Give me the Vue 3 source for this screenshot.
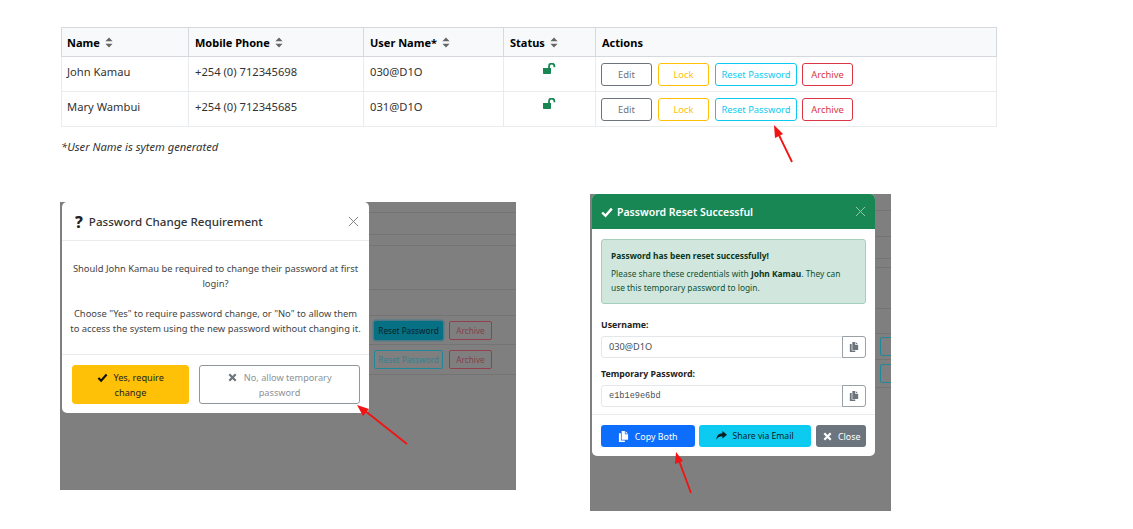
<script setup>
const users = [
  { name: 'John Kamau', phone: '+254 (0) 712345698', username: '030@D1O' },
  { name: 'Mary Wambui', phone: '+254 (0) 712345685', username: '031@D1O' }
]
const columns = [
  { label: 'Name', sort: true },
  { label: 'Mobile Phone', sort: true },
  { label: 'User Name*', sort: true },
  { label: 'Status', sort: true },
  { label: 'Actions', sort: false }
]
// dimmed table rows showing behind each modal
const leftRows = [
  { h: 11 }, { h: 22 }, { h: 11 }, { h: 44 }, { h: 26 },
  { h: 29, active: true }, { h: 30, plain: true }
]
const rightRows = [
  { h: 17 }, { h: 26 }, { h: 22 }, { h: 9 }, { h: 41 }, { h: 25 },
  { h: 26, stub: true }, { h: 28, stub: true }
]
</script>

<template>
  <div class="page">
    <table class="users">
      <colgroup>
        <col style="width: 127px" />
        <col style="width: 175px" />
        <col style="width: 140px" />
        <col style="width: 92px" />
        <col />
      </colgroup>
      <thead>
        <tr>
          <th v-for="col in columns" :key="col.label">
            {{ col.label }}
            <svg v-if="col.sort" class="sort" viewBox="0 0 8 11">
              <path d="M4 0.5 L7.6 4.3 H0.4 Z M4 10.5 L0.4 6.7 H7.6 Z" />
            </svg>
          </th>
        </tr>
      </thead>
      <tbody>
        <tr v-for="user in users" :key="user.username">
          <td>{{ user.name }}</td>
          <td>{{ user.phone }}</td>
          <td>{{ user.username }}</td>
          <td class="status">
            <svg class="unlock" viewBox="0 0 13 11">
              <path d="M0 5 H8 V10.2 Q8 11 7.2 11 H0.8 Q0 11 0 10.2 Z" />
              <path class="shackle" d="M6 5 V3.2 A2.6 2.6 0 0 1 11.4 3.2 V4.2" />
            </svg>
          </td>
          <td class="actions">
            <button class="btn edit">Edit</button>
            <button class="btn lock">Lock</button>
            <button class="btn reset">Reset Password</button>
            <button class="btn archive">Archive</button>
          </td>
        </tr>
      </tbody>
    </table>

    <p class="note">*User Name is sytem generated</p>

    <div class="shots">
      <div class="shot shot-left">
        <div class="modal change-modal">
          <div class="change-head">
            <span class="qmark">?</span>
            <h3>Password Change Requirement</h3>
            <svg class="close-x" viewBox="0 0 12 12"><path d="M1 1 L11 11 M11 1 L1 11" /></svg>
          </div>
          <div class="change-body">
            <p>Should John Kamau be required to change their password at first login?</p>
            <p>Choose "Yes" to require password change, or "No" to allow them<br />to access the system using the new password without changing it.</p>
          </div>
          <div class="change-foot">
            <button class="big-btn yes">
              <svg class="ico" viewBox="0 0 12 12"><path class="thick" d="M1.5 6.5 L4.5 9.5 L10.5 2.8" /></svg>
              Yes, require change
            </button>
            <button class="big-btn no">
              <svg class="ico" viewBox="0 0 12 12"><path class="thick" d="M2.5 2.5 L9.5 9.5 M9.5 2.5 L2.5 9.5" /></svg>
              No, allow temporary password
            </button>
          </div>
        </div>
        <div class="behind">
          <div
            v-for="(row, i) in leftRows"
            :key="i"
            class="dim-row"
            :style="{ height: row.h + 'px' }"
          >
            <template v-if="row.active || row.plain">
              <span class="dim-btn reset-dim" :class="row.active ? 'active' : 'teal'">Reset Password</span>
              <span class="dim-btn red">Archive</span>
            </template>
          </div>
        </div>
      </div>

      <div class="shot shot-right">
        <div class="modal success-modal">
          <div class="success-head">
            <svg class="ico head-ico" viewBox="0 0 12 12"><path class="thick" d="M1.2 6.5 L4.5 9.8 L10.8 2.6" /></svg>
            <h3>Password Reset Successful</h3>
            <svg class="close-x light" viewBox="0 0 12 12"><path d="M1 1 L11 11 M11 1 L1 11" /></svg>
          </div>
          <div class="success-body">
            <div class="alert">
              <strong class="alert-title">Password has been reset successfully!</strong>
              <p>Please share these credentials with <strong>John Kamau</strong>. They can use this temporary password to login.</p>
            </div>
            <label>Username:</label>
            <div class="field">
              <span class="value">030@D1O</span>
              <button class="copy-btn">
                <svg class="copy-ico" viewBox="0 0 12 12"><path d="M4 0 H7.5 V3.5 H11 V9.5 H4 Z M8.3 0.3 L10.8 2.8 H8.3 Z M1 2.5 H3.2 V10.3 H7.5 V12 H1 Z" /></svg>
              </button>
            </div>
            <label>Temporary Password:</label>
            <div class="field">
              <span class="value mono">e1b1e9e6bd</span>
              <button class="copy-btn">
                <svg class="copy-ico" viewBox="0 0 12 12"><path d="M4 0 H7.5 V3.5 H11 V9.5 H4 Z M8.3 0.3 L10.8 2.8 H8.3 Z M1 2.5 H3.2 V10.3 H7.5 V12 H1 Z" /></svg>
              </button>
            </div>
          </div>
          <div class="success-foot">
            <button class="foot-btn copy-both">
              <svg class="ico fill" viewBox="0 0 12 12"><path d="M4 0 H7.5 V3.5 H11 V9.5 H4 Z M8.3 0.3 L10.8 2.8 H8.3 Z M1 2.5 H3.2 V10.3 H7.5 V12 H1 Z" /></svg>
              Copy Both
            </button>
            <button class="foot-btn share">
              <svg class="ico fill" viewBox="0 0 12 12"><path d="M7 1 L12 5.2 L7 9.4 V6.7 C4 6.7 2 7.4 0.5 10.5 C0.6 6 3 3.6 7 3.5 Z" /></svg>
              Share via Email
            </button>
            <button class="foot-btn close">
              <svg class="ico" viewBox="0 0 12 12"><path class="thick" d="M2.5 2.5 L9.5 9.5 M9.5 2.5 L2.5 9.5" /></svg>
              Close
            </button>
          </div>
        </div>
        <div class="behind">
          <div
            v-for="(row, i) in rightRows"
            :key="i"
            class="dim-row"
            :style="{ height: row.h + 'px' }"
          >
            <span v-if="row.stub" class="dim-btn teal stub"></span>
          </div>
        </div>
      </div>
    </div>

    <svg class="arrows" viewBox="0 0 1133 529">
      <g class="arrow">
        <path d="M792 162 L777 131" />
        <path class="head" d="M774 125 L783 134 L775 138 Z" />
      </g>
      <g class="arrow">
        <path d="M407 444 L364 410" />
        <path class="head" d="M357 405 L369 409 L363 416 Z" />
      </g>
      <g class="arrow">
        <path d="M691 493 L678 458" />
        <path class="head" d="M676 452 L683 461 L675 464 Z" />
      </g>
    </svg>
  </div>
</template>

<style>
html, body {
  background: #fff;
}
</style>

<style scoped>
.page {
  position: relative;
  width: 1133px;
  height: 529px;
  overflow: hidden;
  padding: 27px 0 0 61px;
  box-sizing: border-box;
  font-family: "Noto Sans", "Open Sans", sans-serif;
  font-size: 11.2px;
  color: #212529;
}

.users {
  width: 936px;
  border-collapse: collapse;
  table-layout: fixed;
}

.users th,
.users td {
  box-sizing: border-box;
  border: 1px solid #e9ecef;
  padding: 0 6px;
  text-align: left;
}

.users th:first-child,
.users td:first-child {
  padding-left: 5px;
}

.users th {
  height: 29px;
  background: #f8f9fa;
  border-color: #d5d8dc;
  color: #000;
  font-weight: 700;
  font-size: 11px;
}

.users td {
  height: 35px;
  padding-bottom: 5px;
  font-size: 11.2px;
  color: #333;
}

.sort {
  width: 8px;
  height: 11px;
  margin-left: 2px;
  vertical-align: -1px;
  fill: #666;
}

.users td.status {
  vertical-align: top;
  text-align: center;
  padding-top: 6px;
}

.unlock {
  display: block;
  width: 13px;
  height: 11px;
  margin: 0 auto;
  fill: #198754;
}

.unlock .shackle {
  fill: none;
  stroke: #198754;
  stroke-width: 1.8;
}

.users td.actions {
  padding: 0 5px;
  font-size: 0;
}

.btn {
  height: 23px;
  margin-right: 6px;
  padding: 0;
  background: #fff;
  border: 1px solid;
  border-radius: 3px;
  font-family: inherit;
  font-size: 9.4px;
}

.btn.edit { width: 51px; color: #6c757d; border-color: #6c757d; }
.btn.lock { width: 51px; color: #ffc107; border-color: #ffc107; }
.btn.reset { width: 82px; margin-right: 5px; color: #0dcaf0; border-color: #0dcaf0; }
.btn.archive { width: 51px; color: #dc3545; border-color: #dc3545; }

.note {
  margin: 12px 0 0;
  font-size: 11.2px;
  font-style: italic;
  color: #333;
}

.shots {
  display: flex;
  align-items: flex-start;
  margin: 40px 0 0 -1px;
}

.shot {
  display: flex;
  background: #7f7f7f;
  overflow: hidden;
  padding-left: 2px;
  box-sizing: border-box;
}

.shot-left {
  width: 456px;
  height: 288px;
  margin-top: 8px;
}

.shot-right {
  width: 301px;
  height: 317px;
  margin-left: 74px;
}

.modal {
  flex: none;
  background: #fff;
  border-radius: 5px;
  display: flex;
  flex-direction: column;
  align-self: flex-start;
}

.change-modal {
  width: 307px;
  height: 211px;
}

.change-head {
  display: flex;
  align-items: center;
  height: 39px;
  padding: 0 10px 0 13px;
  border-bottom: 1px solid #e9ecef;
  box-sizing: border-box;
}

.qmark {
  font-size: 16px;
  font-weight: 800;
  color: #222;
  margin-right: 6px;
  margin-top: 2px;
}

.change-head h3 {
  flex: 1;
  margin: 0;
  font-size: 11.6px;
  font-weight: 500;
  color: #333;
}

.close-x {
  width: 11px;
  height: 11px;
  fill: none;
  stroke: #777;
  stroke-width: 1;
}

.close-x.light {
  stroke: #9ccdb3;
}

.change-body {
  height: 114px;
  padding: 20px 6px 0;
  box-sizing: border-box;
  border-bottom: 1px solid #e9ecef;
  text-align: center;
  font-size: 9.4px;
  line-height: 15px;
  color: #444;
}

.change-body p {
  margin: 0 0 15px;
}

.change-foot {
  display: flex;
  gap: 10px;
  padding: 10px 9px 9px 10px;
}

.big-btn {
  height: 39px;
  padding: 0 14px;
  border-radius: 3px;
  font-family: inherit;
  font-size: 9.2px;
  line-height: 15px;
}

.big-btn.yes {
  width: 117px;
  background: #ffc107;
  border: 1px solid #ffc107;
  color: #222;
}

.big-btn.no {
  width: 161px;
  background: #fff;
  border: 1px solid #8f969c;
  color: #8b9298;
}

.ico {
  width: 11px;
  height: 11px;
  margin-right: 3px;
  vertical-align: -2px;
  fill: none;
  stroke: currentColor;
}

.ico.fill {
  fill: currentColor;
  stroke: none;
}

.thick {
  stroke-width: 2.4;
  fill: none;
}

.big-btn.yes .ico { color: #111; }
.big-btn.no .ico { color: #6c757d; }

.behind {
  flex: 1;
  min-width: 0;
}

.dim-row {
  display: flex;
  align-items: center;
  gap: 6px;
  padding-left: 5px;
  border-bottom: 1px solid #747474;
  box-sizing: border-box;
}

.dim-btn {
  height: 19px;
  width: 43px;
  line-height: 17px;
  text-align: center;
  border: 1px solid;
  border-radius: 2px;
  box-sizing: border-box;
  font-size: 8.2px;
  white-space: nowrap;
}

.dim-btn.reset-dim { width: 69px; }

.dim-btn.active {
  background: #067084;
  border-color: #067084;
  color: #06222a;
  box-shadow: 0 0 0 1.5px #4d7a85;
}

.dim-btn.teal { border-color: #23879b; color: #2f8294; }
.dim-btn.red { border-color: #91414c; color: #85414b; }

.dim-btn.stub {
  flex: none;
  width: 24px;
}

.success-modal {
  width: 283px;
  height: 262px;
}

.success-head {
  display: flex;
  align-items: center;
  height: 35px;
  padding: 0 9px;
  background: #198754;
  border-radius: 5px 5px 0 0;
  color: #fff;
  box-sizing: border-box;
}

.head-ico {
  width: 12px;
  height: 12px;
  margin-right: 4px;
}

.success-head h3 {
  flex: 1;
  margin: 0;
  font-size: 10.5px;
  font-weight: 600;
}

.success-body {
  height: 186px;
  padding: 10px 9px 0;
  box-sizing: border-box;
  border-bottom: 1px solid #e9ecef;
}

.alert {
  height: 65px;
  padding: 9px 9px 0;
  background: #d1e7dd;
  border: 1px solid #a3cfbb;
  border-radius: 3px;
  box-sizing: border-box;
  font-size: 8.4px;
  line-height: 14px;
  color: #0f5132;
}

.alert-title {
  display: block;
  color: #0a3622;
  margin-bottom: 4px;
}

.alert p {
  margin: 0;
}

.alert p strong {
  color: #0a3622;
}

.success-body label {
  display: block;
  margin-top: 14px;
  height: 18px;
  font-size: 8.8px;
  line-height: 14px;
  font-weight: 700;
  color: #222;
}

.field + label {
  margin-top: 9px;
}

.field {
  display: flex;
  height: 22px;
  border: 1px solid #e4e7ea;
  border-radius: 3px;
  box-sizing: border-box;
}

.value {
  flex: 1;
  padding-left: 7px;
  font-size: 9.2px;
  line-height: 20px;
  color: #495057;
}

.value.mono {
  font-family: "Liberation Mono", monospace;
  font-size: 8.6px;
}

.copy-btn {
  width: 24px;
  margin: -1px;
  padding: 0;
  background: #fff;
  border: 1px solid #9aa1a7;
  border-radius: 0 3px 3px 0;
}

.copy-ico {
  display: block;
  width: 10px;
  height: 10px;
  margin: 0 auto;
  fill: #6c757d;
}

.success-foot {
  display: flex;
  gap: 4px;
  padding: 10px 9px 9px;
}

.foot-btn {
  height: 22px;
  padding: 0;
  border: none;
  border-radius: 3px;
  font-family: inherit;
  font-size: 8.9px;
}

.foot-btn.copy-both { width: 94px; background: #0d6efd; color: #fff; }
.foot-btn.share { width: 112px; font-size: 8.6px; background: #0dcaf0; color: #0b1f26; }
.foot-btn.close { width: 50px; margin-left: 1px; background: #6c757d; color: #fff; }

.arrows {
  position: absolute;
  inset: 0;
  width: 1133px;
  height: 529px;
  pointer-events: none;
}

.arrow path {
  fill: none;
  stroke: #f21313;
  stroke-width: 1.8;
}

.arrow .head {
  fill: #f21313;
  stroke: none;
}
</style>
